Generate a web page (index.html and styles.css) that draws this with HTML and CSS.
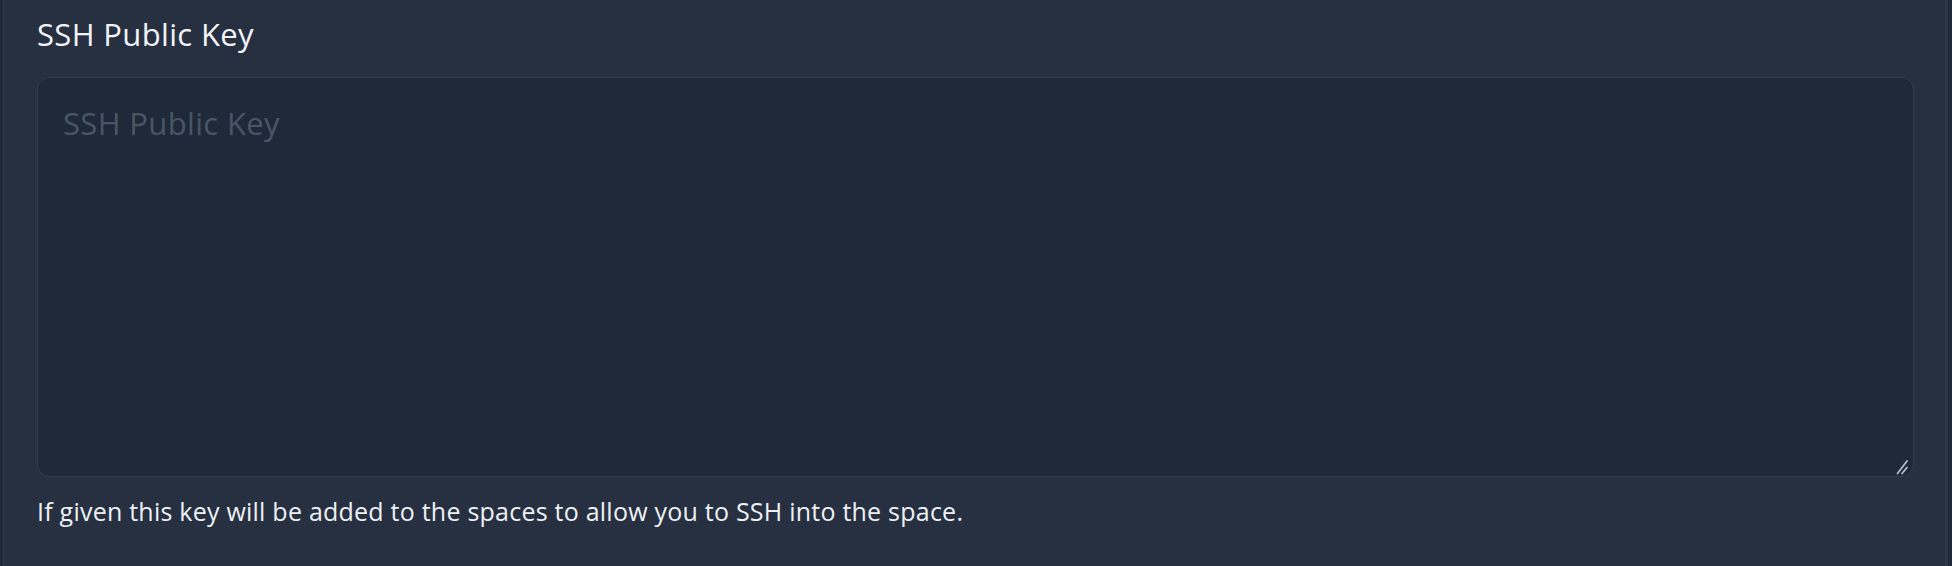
FILE: index.html
```html
<!DOCTYPE html>
<html lang="en">
<head>
<meta charset="utf-8">
<title>SSH Public Key</title>
<link rel="stylesheet" href="styles.css">
</head>
<body>
<div class="shell">
  <section class="panel">
    <label class="field-label" for="sshkey">SSH Public Key</label>
    <div class="input-wrap">
      <textarea id="sshkey" class="field-input" placeholder="SSH Public Key"></textarea>
      <svg class="grabber" width="14" height="16" viewBox="0 0 14 16" aria-hidden="true">
        <line x1="1.5" y1="14.5" x2="11" y2="2" stroke="#b4bcc8" stroke-width="1.8" stroke-linecap="round"/>
        <line x1="6" y1="14.5" x2="11" y2="8.5" stroke="#b4bcc8" stroke-width="1.8" stroke-linecap="round"/>
      </svg>
    </div>
    <p class="field-help">If given this key will be added to the spaces to allow you to SSH into the space.</p>
  </section>
</div>
</body>
</html>
```
FILE: styles.css
```css
html, body {
  margin: 0;
  padding: 0;
  height: 100%;
}
body {
  background: #1f2836;
  font-family: "Open Sans", "Noto Sans", sans-serif;
}
.shell {
  display: flex;
  height: 100%;
  padding-left: 3px;
  padding-right: 4px;
  box-sizing: border-box;
}
.panel {
  flex: 1;
  display: flex;
  flex-direction: column;
  background: #263041;
  border-left: 1px solid #2e3848;
  border-right: 3px solid #2c3646;
  padding: 14px 31px 0 33px;
  box-sizing: border-box;
}
.field-label {
  color: #f2f4f7;
  font-size: 31px;
  line-height: 40px;
  height: 40px;
  letter-spacing: 0.35px;
}
.input-wrap {
  position: relative;
  margin-top: 23px;
  display: flex;
}
.field-input {
  flex: 1;
  height: 400px;
  box-sizing: border-box;
  background: #1e2939;
  border: 1px solid #323d4e;
  border-radius: 12px;
  padding: 25px 25px;
  color: #e5e7eb;
  font-family: inherit;
  font-size: 31px;
  line-height: 40px;
  letter-spacing: 0.35px;
  resize: none;
  outline: none;
  margin: 0;
}
.field-input::placeholder {
  color: #4a5566;
}
.grabber {
  position: absolute;
  right: 4px;
  bottom: 2px;
  pointer-events: none;
}
.field-help {
  margin: 18px 0 0 0;
  color: #eef1f5;
  font-size: 25px;
  line-height: 32px;
  letter-spacing: 0.23px;
}
```
